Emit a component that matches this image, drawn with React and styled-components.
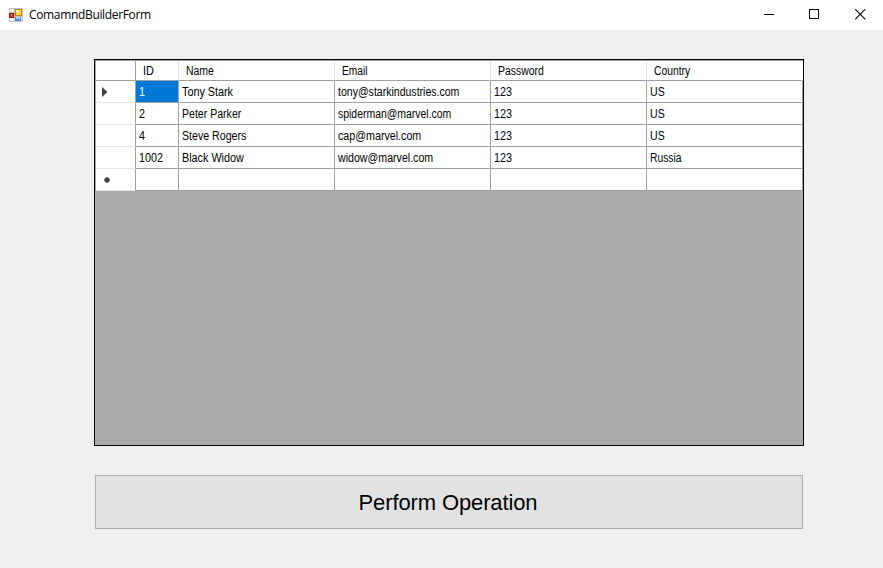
import React from "react";
import styled, { createGlobalStyle } from "styled-components";

const GlobalStyle = createGlobalStyle`
  * { box-sizing: border-box; }
  html, body { margin: 0; background: #f0f0f0; overflow: hidden; }
`;

const Window = styled.div`
  width: 883px;
  height: 568px;
  display: flex;
  flex-direction: column;
  background: #f0f0f0;
  color: #000;
  font-family: "Liberation Sans", Arial, sans-serif;
`;

const TitleBar = styled.header`
  height: 30px;
  flex: none;
  display: flex;
  align-items: center;
  background: #fff;
  padding-left: 9px;
`;

const FormIcon = styled.svg`
  display: block;
  margin: 0 6px 1px 0;
`;

const Title = styled.h1`
  margin: 0;
  flex: 1;
  font: 400 12px/16px "Open Sans", sans-serif;
  letter-spacing: -0.34px;
`;

const Caption = styled.button`
  width: ${(p) => p.$width ?? 45}px;
  height: 30px;
  padding: 0 0 1px;
  border: 0;
  background: transparent;
  display: flex;
  justify-content: center;
  align-items: center;
  svg { display: block; }
`;

const Content = styled.main`
  padding: 29px 79px 0 94px;
  display: flex;
  flex-direction: column;
`;

const DataGrid = styled.section`
  width: 710px;
  height: 387px;
  border: 1px solid #000;
  background: #ababab;
`;

const Row = styled.div`
  display: grid;
  grid-template-columns: 40px 43px repeat(4, 156px);
  height: ${(p) => (p.$header ? 21 : 22)}px;
  width: 708px;
  border-left: 1px solid #a0a0a0;
  border-top: ${(p) => (p.$header ? "1px solid #a0a0a0" : "0")};
`;

const Cell = styled.div`
  display: flex;
  align-items: center;
  padding-left: ${(p) => p.$pad ?? 3}px;
  border-right: 1px solid #a0a0a0;
  border-bottom: 1px solid #a0a0a0;
  background: ${(p) => (p.$selected ? "#0078d7" : "#fff")};
  color: ${(p) => (p.$selected ? "#fff" : "#000")};
`;

const HeaderCell = styled(Cell)`
  padding-left: 7px;
  border-right-color: ${(p) => (p.$last ? "#fff" : "#e5e5e5")};
`;

const RowHeader = styled(Cell)`
  border-bottom-color: #e5e5e5;
`;

const Label = styled.span`
  display: inline-block;
  font-size: 12px;
  line-height: 14px;
  white-space: nowrap;
  transform: scaleX(${(p) => p.$stretch ?? 0.9});
  transform-origin: left center;
`;

const OperationButton = styled.button`
  width: 708px;
  height: 54px;
  margin: 29px 0 0 1px;
  padding: 1px 2px 0 0;
  border: 1px solid #adadad;
  background: #e1e1e1;
  color: #000;
  font: 400 22px/26px "Liberation Sans", Arial, sans-serif;
  letter-spacing: -0.12px;
`;

const columns = [
  ["ID", 0.91],
  ["Name", 0.87],
  ["Email", 0.85],
  ["Password", 0.87],
  ["Country", 0.86],
];

const records = [
  [["1", 0.9], ["Tony Stark", 0.9], ["tony@starkindustries.com", 0.878], ["123", 0.9], ["US", 0.88]],
  [["2", 0.9], ["Peter Parker", 0.88], ["spiderman@marvel.com", 0.87], ["123", 0.9], ["US", 0.88]],
  [["4", 0.9], ["Steve Rogers", 0.885], ["cap@marvel.com", 0.89], ["123", 0.9], ["US", 0.88]],
  [["1002", 0.9], ["Black Widow", 0.9], ["widow@marvel.com", 0.885], ["123", 0.9], ["Russia", 0.86]],
];

function AppIcon() {
  return (
    <FormIcon width="14" height="14" viewBox="0 0 14 14" shapeRendering="crispEdges">
      <path d="M0 0h14v14H0z" fill="#c4c4c4" />
      <path d="M1 1h4v3H1zM1 10h4v3H1z" fill="#f3f3f3" />
      <path d="M0 5h5v5H0z" fill="#a80c0c" />
      <path d="M1 6h3v3H1z" fill="#e03226" />
      <path d="M2 6h1v2H2z" fill="#ff8c72" />
      <path d="M6 1h7v7H6z" fill="#bd8407" />
      <path d="M7 2h5v5H7z" fill="#ffd44d" />
      <path d="M7 2h3v2H7z" fill="#fff0a0" />
      <path d="M6 9h6v4H6z" fill="#4f8de0" />
      <path d="M7 9h4v2H7z" fill="#a9ceff" />
      <path d="M12 9h1v4h-1z" fill="#eee" />
    </FormIcon>
  );
}

export default function App() {
  return (
    <>
      <GlobalStyle />
      <Window>
        <TitleBar>
          <AppIcon />
          <Title>ComamndBuilderForm</Title>
          <Caption aria-label="Minimize">
            <svg width="11" height="11" shapeRendering="crispEdges"><path d="M0 5h10v1H0z" /></svg>
          </Caption>
          <Caption aria-label="Maximize">
            <svg width="11" height="11"><rect x=".5" y=".5" width="9" height="9" fill="none" stroke="#000" /></svg>
          </Caption>
          <Caption aria-label="Close" $width={46}>
            <svg width="11" height="11"><path d="M.2.2l10.1 10.1M10.3.2L.2 10.3" stroke="#000" strokeWidth="1.1" /></svg>
          </Caption>
        </TitleBar>
        <Content>
          <DataGrid>
            <Row $header>
              <Cell />
              {columns.map(([name, stretch], i) => (
                <HeaderCell key={name} $last={i === 4}>
                  <Label $stretch={stretch}>{name}</Label>
                </HeaderCell>
              ))}
            </Row>
            {records.map((record, r) => (
              <Row key={r}>
                <RowHeader $pad={6}>
                  {r === 0 && (
                    <svg width="6" height="10"><path d="M0 0l5.5 5L0 10z" fill="#404040" /></svg>
                  )}
                </RowHeader>
                {record.map(([value, stretch], c) => (
                  <Cell key={c} $selected={r === 0 && c === 0} $pad={c === 2 ? 2.5 : 3}>
                    <Label $stretch={stretch}>{value}</Label>
                  </Cell>
                ))}
              </Row>
            ))}
            <Row>
              <RowHeader $pad={8}>
                <svg width="7" height="7" viewBox="0 -1 7 7">
                  <path d="M3 0v6M0 3h6M1 1l4 4M5 1L1 5" stroke="#404040" strokeWidth="1.3" />
                </svg>
              </RowHeader>
              {columns.map(([name]) => <Cell key={name} />)}
            </Row>
          </DataGrid>
          <OperationButton>Perform Operation</OperationButton>
        </Content>
      </Window>
    </>
  );
}
